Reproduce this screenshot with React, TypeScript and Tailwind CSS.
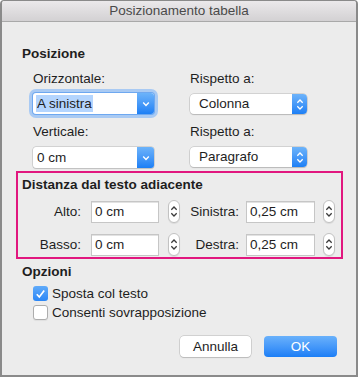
/**
 * Dialog — "Posizionamento tabella" (macOS-style sheet).
 */

function ChevronDown({ className = "" }: { className?: string }) {
  return (
    <svg width="8" height="6" viewBox="0 0 8 6" className={className}>
      <path d="M1.2 1.6 L4 4.4 L6.8 1.6" fill="none" stroke="currentColor" strokeWidth="1.4" />
    </svg>
  );
}

function UpDown({ className = "" }: { className?: string }) {
  return (
    <svg width="8" height="13" viewBox="0 0 8 13" className={className}>
      <path d="M1.3 4.8 L4 2 L6.7 4.8" fill="none" stroke="currentColor" strokeWidth="1.3" />
      <path d="M1.3 8.2 L4 11 L6.7 8.2" fill="none" stroke="currentColor" strokeWidth="1.3" />
    </svg>
  );
}

function ComboBox({
  value,
  focused = false,
  selected = false,
}: {
  value: string;
  focused?: boolean;
  selected?: boolean;
}) {
  return (
    <div
      className={`flex h-[21px] w-[121px] items-stretch rounded-[3px] bg-white ${
        focused
          ? "shadow-[0_0_0_1px_#6ea8f0,0_0_0_4px_#a9caf3]"
          : "shadow-[0_0_0_0.5px_#b8b8b8,0_1px_1px_rgba(0,0,0,0.15)]"
      }`}
    >
      <div className="flex flex-1 items-center pl-[3px]">
        <span className={`px-[1px] leading-[17px] ${selected ? "bg-[#b4d5fe]" : ""}`}>{value}</span>
      </div>
      <div className="flex w-[17px] items-center justify-center rounded-r-[3px] bg-gradient-to-b from-[#6cb3fa] to-[#1b7ff5] text-white">
        <ChevronDown />
      </div>
    </div>
  );
}

function PopUp({ value }: { value: string }) {
  return (
    <div className="flex h-[20px] w-[117px] items-stretch rounded-[4px] bg-white shadow-[0_0_0_0.5px_#b8b8b8,0_1px_1px_rgba(0,0,0,0.2)]">
      <div className="flex flex-1 items-center pl-[9px]">{value}</div>
      <div className="flex w-[15px] items-center justify-center rounded-r-[4px] bg-gradient-to-b from-[#6cb3fa] to-[#1b7ff5] text-white">
        <UpDown />
      </div>
    </div>
  );
}

function Stepper() {
  return (
    <div className="flex h-[23px] w-[12px] items-center justify-center rounded-full border border-[#c2c2c2] bg-white text-[#3a3a3a] shadow-[0_1px_1px_rgba(0,0,0,0.08)]">
      <UpDown />
    </div>
  );
}

function Field({ value, width }: { value: string; width: string }) {
  return (
    <div
      className={`flex h-[22px] ${width} items-center border border-[#c6c6c6] bg-white pl-[3px] shadow-[inset_0_1px_0_#e2e2e2]`}
    >
      {value}
    </div>
  );
}

function SpacingRow({
  l1,
  v1,
  l2,
  v2,
}: {
  l1: string;
  v1: string;
  l2: string;
  v2: string;
}) {
  return (
    <div className="flex items-center">
      <span className="w-[63px] text-right">{l1}</span>
      <div className="ml-[10px]">
        <Field value={v1} width="w-[68px]" />
      </div>
      <div className="ml-[9px]">
        <Stepper />
      </div>
      <span className="w-[59px] text-right">{l2}</span>
      <div className="ml-[7px]">
        <Field value={v2} width="w-[69px]" />
      </div>
      <div className="ml-[8px]">
        <Stepper />
      </div>
    </div>
  );
}

function CheckBox({ checked, label }: { checked: boolean; label: string }) {
  return (
    <div className="flex h-[19px] items-center">
      {checked ? (
        <div className="flex h-[15px] w-[15px] items-center justify-center rounded-[3px] bg-gradient-to-b from-[#5faaf9] to-[#2a86f6]">
          <svg width="11" height="10" viewBox="0 0 11 10">
            <path d="M1.8 5.2 L4.3 8 L9.2 1.5" fill="none" stroke="white" strokeWidth="1.7" />
          </svg>
        </div>
      ) : (
        <div className="h-[15px] w-[15px] rounded-[3px] border border-[#adadad] bg-white shadow-[0_1px_1px_rgba(0,0,0,0.06)]" />
      )}
      <span className="ml-[4px]">{label}</span>
    </div>
  );
}

export default function App() {
  return (
    <div
      className="h-[377px] w-[358px] overflow-hidden rounded-t-[4px] border-2 border-t border-[#8a8a8a] bg-[#ececec] text-[13.5px] leading-[16px] text-[#1e1e1e]"
      style={{ fontFamily: '"Liberation Sans", Arial, sans-serif' }}
    >
      {/* title bar */}
      <div className="flex h-[21px] items-center justify-center border-b border-[#a9a9a9] bg-gradient-to-b from-[#ebe9eb] to-[#d3d1d3] text-[#4a4a4a]">
        Posizionamento tabella
      </div>

      <div className="pl-[20px] pt-[24px]">
        <div className="font-bold">Posizione</div>

        <div className="mt-[9px] flex">
          <div className="ml-[11px] w-[157px]">
            <div>Orizzontale:</div>
            <div className="mt-[6px]">
              <ComboBox value="A sinistra" focused selected />
            </div>
            <div className="mt-[10px]">Verticale:</div>
            <div className="mt-[7px]">
              <ComboBox value="0 cm" />
            </div>
          </div>
          <div>
            <div>Rispetto a:</div>
            <div className="mt-[7px]">
              <PopUp value="Colonna" />
            </div>
            <div className="mt-[10px]">Rispetto a:</div>
            <div className="mt-[7px]">
              <PopUp value="Paragrafo" />
            </div>
          </div>
        </div>
      </div>

      {/* highlighted group */}
      <div className="ml-[14px] mt-[3px] h-[88px] w-[327px] border-2 border-[#e1177f] pt-[4px]">
        <div className="pl-[4px] font-bold">Distanza dal testo adiacente</div>
        <div className="mt-[7px]">
          <SpacingRow l1="Alto:" v1="0 cm" l2="Sinistra:" v2="0,25 cm" />
        </div>
        <div className="mt-[10px]">
          <SpacingRow l1="Basso:" v1="0 cm" l2="Destra:" v2="0,25 cm" />
        </div>
      </div>

      <div className="pl-[20px] pt-[5px]">
        <div className="font-bold">Opzioni</div>
        <div className="ml-[11px] mt-[4px]">
          <CheckBox checked label="Sposta col testo" />
          <CheckBox checked={false} label="Consenti sovrapposizione" />
        </div>
      </div>

      <div className="mt-[14px] flex justify-end gap-[13px] pr-[19px]">
        <button className="h-[21px] w-[71px] rounded-[4px] bg-white shadow-[0_0_0_0.5px_#b5b5b5,0_1px_1px_rgba(0,0,0,0.18)]">
          Annulla
        </button>
        <button className="h-[21px] w-[73px] rounded-[4px] bg-gradient-to-b from-[#69b1fb] to-[#1a7ef6] text-white">
          OK
        </button>
      </div>
    </div>
  );
}
